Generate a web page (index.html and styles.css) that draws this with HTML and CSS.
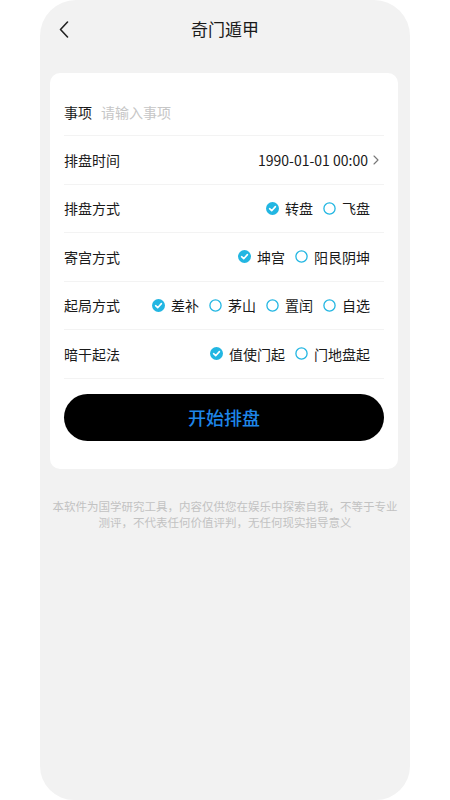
FILE: index.html
```html
<!DOCTYPE html>
<html lang="zh">
<head>
<meta charset="utf-8">
<title>奇门遁甲</title>
<link rel="stylesheet" href="styles.css">
</head>
<body>
<div class="phone">
  <header class="nav">
    <svg class="back" width="10" height="17" viewBox="0 0 10 17"><path d="M8.5 1 L1.5 8.5 L8.5 16" fill="none" stroke="#222" stroke-width="1.6" stroke-linecap="round" stroke-linejoin="round"/></svg>
    <div class="title">奇门遁甲</div>
  </header>

  <section class="card">
    <div class="row">
      <span class="label">事项</span>
      <span class="placeholder">请输入事项</span>
    </div>
    <div class="row">
      <span class="label">排盘时间</span>
      <span class="value">1990-01-01 00:00
        <svg class="chev" width="6" height="10" viewBox="0 0 6 10"><path d="M1 1 L5 5 L1 9" fill="none" stroke="#777" stroke-width="1.1" stroke-linecap="round" stroke-linejoin="round"/></svg>
      </span>
    </div>
    <div class="row">
      <span class="label">排盘方式</span>
      <div class="opts">
        <span class="opt"><svg class="ic" viewBox="0 0 13 13"><circle cx="6.5" cy="6.5" r="6.5" fill="#22b6e2"/><path d="M3.6 6.7 L5.7 8.7 L9.4 4.6" fill="none" stroke="#fff" stroke-width="1.6" stroke-linecap="round" stroke-linejoin="round"/></svg>转盘</span>
        <span class="opt"><svg class="ic" viewBox="0 0 13 13"><circle cx="6.5" cy="6.5" r="5.6" fill="none" stroke="#22b6e2" stroke-width="1.3"/></svg>飞盘</span>
      </div>
    </div>
    <div class="row">
      <span class="label">寄宫方式</span>
      <div class="opts">
        <span class="opt"><svg class="ic" viewBox="0 0 13 13"><circle cx="6.5" cy="6.5" r="6.5" fill="#22b6e2"/><path d="M3.6 6.7 L5.7 8.7 L9.4 4.6" fill="none" stroke="#fff" stroke-width="1.6" stroke-linecap="round" stroke-linejoin="round"/></svg>坤宫</span>
        <span class="opt"><svg class="ic" viewBox="0 0 13 13"><circle cx="6.5" cy="6.5" r="5.6" fill="none" stroke="#22b6e2" stroke-width="1.3"/></svg>阳艮阴坤</span>
      </div>
    </div>
    <div class="row">
      <span class="label">起局方式</span>
      <div class="opts">
        <span class="opt"><svg class="ic" viewBox="0 0 13 13"><circle cx="6.5" cy="6.5" r="6.5" fill="#22b6e2"/><path d="M3.6 6.7 L5.7 8.7 L9.4 4.6" fill="none" stroke="#fff" stroke-width="1.6" stroke-linecap="round" stroke-linejoin="round"/></svg>差补</span>
        <span class="opt"><svg class="ic" viewBox="0 0 13 13"><circle cx="6.5" cy="6.5" r="5.6" fill="none" stroke="#22b6e2" stroke-width="1.3"/></svg>茅山</span>
        <span class="opt"><svg class="ic" viewBox="0 0 13 13"><circle cx="6.5" cy="6.5" r="5.6" fill="none" stroke="#22b6e2" stroke-width="1.3"/></svg>置闰</span>
        <span class="opt"><svg class="ic" viewBox="0 0 13 13"><circle cx="6.5" cy="6.5" r="5.6" fill="none" stroke="#22b6e2" stroke-width="1.3"/></svg>自选</span>
      </div>
    </div>
    <div class="row">
      <span class="label">暗干起法</span>
      <div class="opts">
        <span class="opt"><svg class="ic" viewBox="0 0 13 13"><circle cx="6.5" cy="6.5" r="6.5" fill="#22b6e2"/><path d="M3.6 6.7 L5.7 8.7 L9.4 4.6" fill="none" stroke="#fff" stroke-width="1.6" stroke-linecap="round" stroke-linejoin="round"/></svg>值使门起</span>
        <span class="opt"><svg class="ic" viewBox="0 0 13 13"><circle cx="6.5" cy="6.5" r="5.6" fill="none" stroke="#22b6e2" stroke-width="1.3"/></svg>门地盘起</span>
      </div>
    </div>

    <button class="start">开始排盘</button>
  </section>

  <div class="disclaimer">
    <span class="line">本软件为国学研究工具，内容仅供您在娱乐中探索自我，不等于专业</span>
    <span class="line">测评，不代表任何价值评判，无任何现实指导意义</span>
  </div>
</div>
</body>
</html>
```

FILE: styles.css
```css
* { box-sizing: border-box; }
html, body {
  margin: 0;
  padding: 0;
  background: #ffffff;
}
body {
  font-family: "Noto Sans CJK SC", "Noto Sans", sans-serif;
  color: #222;
}
.phone {
  margin-left: 40px;
  width: 370px;
  height: 800px;
  background: #f2f2f2;
  border-radius: 36px 36px 34px 34px;
  overflow: hidden;
}
.nav {
  height: 58px;
  display: flex;
  align-items: center;
  justify-content: center;
  position: relative;
}
.back {
  position: absolute;
  left: 19px;
  top: 21px;
}
.title {
  font-size: 17px;
  color: #1a1a1a;
  line-height: 20px;
}
.card {
  margin: 15px 0 0 10px;
  width: 348px;
  background: #fff;
  border-radius: 10px;
  padding: 15px 14px 28px 14px;
}
.row {
  height: 48.5px;
  border-bottom: 1px solid #f3f3f3;
  display: flex;
  align-items: center;
  justify-content: space-between;
  font-size: 14px;
  line-height: 20px;
}
.row:first-child {
  justify-content: flex-start;
  height: 48px;
}
.label {
  color: #1a1a1a;
}
.placeholder {
  color: #c6c6c6;
  margin-left: 9px;
}
.value {
  display: flex;
  align-items: center;
  color: #1a1a1a;
  font-size: 14px;
  margin-right: 5px;
}
.chev {
  margin-left: 5px;
}
.opts {
  display: flex;
  align-items: center;
  gap: 10px;
  margin-right: 14px;
}
.opt {
  display: flex;
  align-items: center;
  color: #1a1a1a;
}
.ic {
  width: 13px;
  height: 13px;
  margin-right: 6px;
}
.start {
  display: block;
  width: 100%;
  height: 47px;
  margin-top: 15px;
  border: none;
  border-radius: 24px;
  background: #000;
  color: #1e86e8;
  font-family: "Noto Sans CJK SC", sans-serif;
  font-size: 18px;
  font-weight: 500;
}
.disclaimer {
  margin-top: 29px;
  display: flex;
  flex-direction: column;
  align-items: center;
  color: #c2c2c2;
}
.line {
  white-space: nowrap;
  font-size: 11.5px;
  line-height: 16px;
}
```
